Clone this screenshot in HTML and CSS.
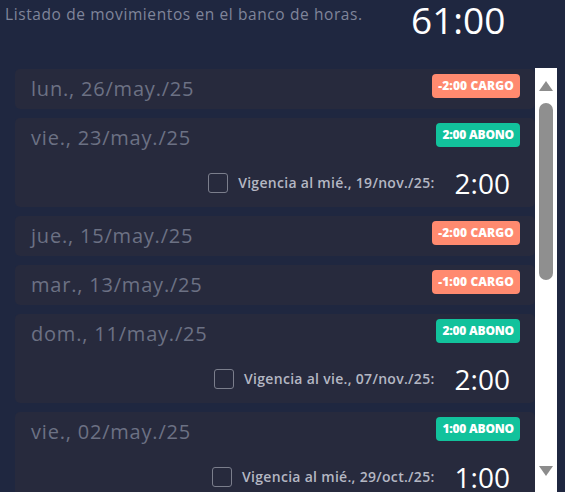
FILE: index.html
```html
<!DOCTYPE html>
<html lang="es">
  <head>
    <meta charset="utf-8">
    <meta name="viewport" content="width=device-width, initial-scale=1.0">
    <title>Banco de horas</title>
    <link rel="stylesheet" href="styles.css">
  </head>
  <body>
    <header class="summary">
      <span class="summary-label">Listado de movimientos en el banco de horas.</span>
      <span class="summary-total">61:00</span>
    </header>

    <div class="panel">
      <div class="moves">
        <div class="move">
          <div class="move-head">
            <span class="move-date">lun., 26/may./25</span>
            <span class="badge badge-cargo">-2:00 Cargo</span>
          </div>
        </div>

        <div class="move">
          <div class="move-head">
            <span class="move-date">vie., 23/may./25</span>
            <span class="badge badge-abono">2:00 Abono</span>
          </div>
          <div class="move-foot">
            <span class="check"></span>
            <span class="expiry">Vigencia al mié., 19/nov./25:</span>
            <span class="amount">2:00</span>
          </div>
        </div>

        <div class="move">
          <div class="move-head">
            <span class="move-date">jue., 15/may./25</span>
            <span class="badge badge-cargo">-2:00 Cargo</span>
          </div>
        </div>

        <div class="move">
          <div class="move-head">
            <span class="move-date">mar., 13/may./25</span>
            <span class="badge badge-cargo">-1:00 Cargo</span>
          </div>
        </div>

        <div class="move">
          <div class="move-head">
            <span class="move-date">dom., 11/may./25</span>
            <span class="badge badge-abono">2:00 Abono</span>
          </div>
          <div class="move-foot">
            <span class="check"></span>
            <span class="expiry">Vigencia al vie., 07/nov./25:</span>
            <span class="amount">2:00</span>
          </div>
        </div>

        <div class="move">
          <div class="move-head">
            <span class="move-date">vie., 02/may./25</span>
            <span class="badge badge-abono">1:00 Abono</span>
          </div>
          <div class="move-foot">
            <span class="check"></span>
            <span class="expiry">Vigencia al mié., 29/oct./25:</span>
            <span class="amount">1:00</span>
          </div>
        </div>
      </div>

      <!-- barra de desplazamiento dibujada -->
      <div class="scrollbar">
        <span class="arrow arrow-up"></span>
        <span class="thumb"></span>
        <span class="arrow arrow-down"></span>
      </div>
    </div>
  </body>
</html>
```

FILE: styles.css
```css
  html, body {
    height: 100%;
  }

  body {
    background-color: #1f2740;
    color: #fff;
    font-family: 'Open Sans', 'Liberation Sans', sans-serif;
    margin: 0;
    padding: 0;
    overflow: hidden;
  }

  .summary {
    display: flex;
    align-items: flex-start;
    height: 68px;
    padding-left: 5px;
    box-sizing: border-box;
  }

  .summary-label {
    color: #80859a;
    font-size: 15.5px;
    letter-spacing: 0.6px;
    line-height: 28px;
    width: 406px;
    white-space: nowrap;
  }

  .summary-total {
    font-size: 37px;
    line-height: 40px;
    color: #fff;
  }

  .panel {
    display: flex;
    margin-left: 15px;
    width: 542px;
    height: 424px;
  }

  .moves {
    flex: 1;
    display: flex;
    flex-direction: column;
    gap: 9px;
    padding-top: 1px;
    overflow: hidden;
  }

  .move {
    flex-shrink: 0;
    background-color: #272a3d;
    border-radius: 5px;
    padding: 0 15px 0 16px;
  }

  .move-head {
    display: flex;
    justify-content: space-between;
    align-items: flex-start;
    height: 40px;
  }

  .move-date {
    color: #6c7184;
    font-size: 20px;
    letter-spacing: 0.8px;
    line-height: 40px;
  }

  .badge {
    margin-top: 5px;
    height: 24px;
    line-height: 24px;
    padding: 0 6px;
    border-radius: 4px;
    font-size: 12px;
    font-weight: 800;
    text-transform: uppercase;
    color: #fff;
  }

  .badge-cargo {
    background-color: #ff8a6f;
    letter-spacing: 0.1px;
  }

  .badge-abono {
    background-color: #12c29c;
    letter-spacing: -0.2px;
  }

  .move-foot {
    display: flex;
    justify-content: flex-end;
    align-items: center;
    height: 49px;
    padding-right: 10px;
  }

  .check {
    width: 18px;
    height: 18px;
    border: 1px solid #7b7e8c;
    border-radius: 3px;
    margin-right: 10px;
  }

  .expiry {
    color: #b4b7c3;
    font-size: 14px;
    font-weight: 600;
    letter-spacing: 0.3px;
    margin-right: 20px;
  }

  .amount {
    font-size: 28px;
    color: #fff;
  }

  .scrollbar {
    width: 22px;
    background-color: #fff;
    display: flex;
    flex-direction: column;
    align-items: center;
  }

  .arrow {
    width: 0;
    height: 0;
    border-left: 7px solid transparent;
    border-right: 7px solid transparent;
  }

  .arrow-up {
    margin-top: 13px;
    border-bottom: 10px solid #8c8c8c;
  }

  .arrow-down {
    margin-top: auto;
    margin-bottom: 16px;
    border-top: 10px solid #8c8c8c;
  }

  .thumb {
    width: 14px;
    height: 177px;
    margin-top: 12px;
    background-color: #8f8f8f;
    border-radius: 7px;
  }
```
